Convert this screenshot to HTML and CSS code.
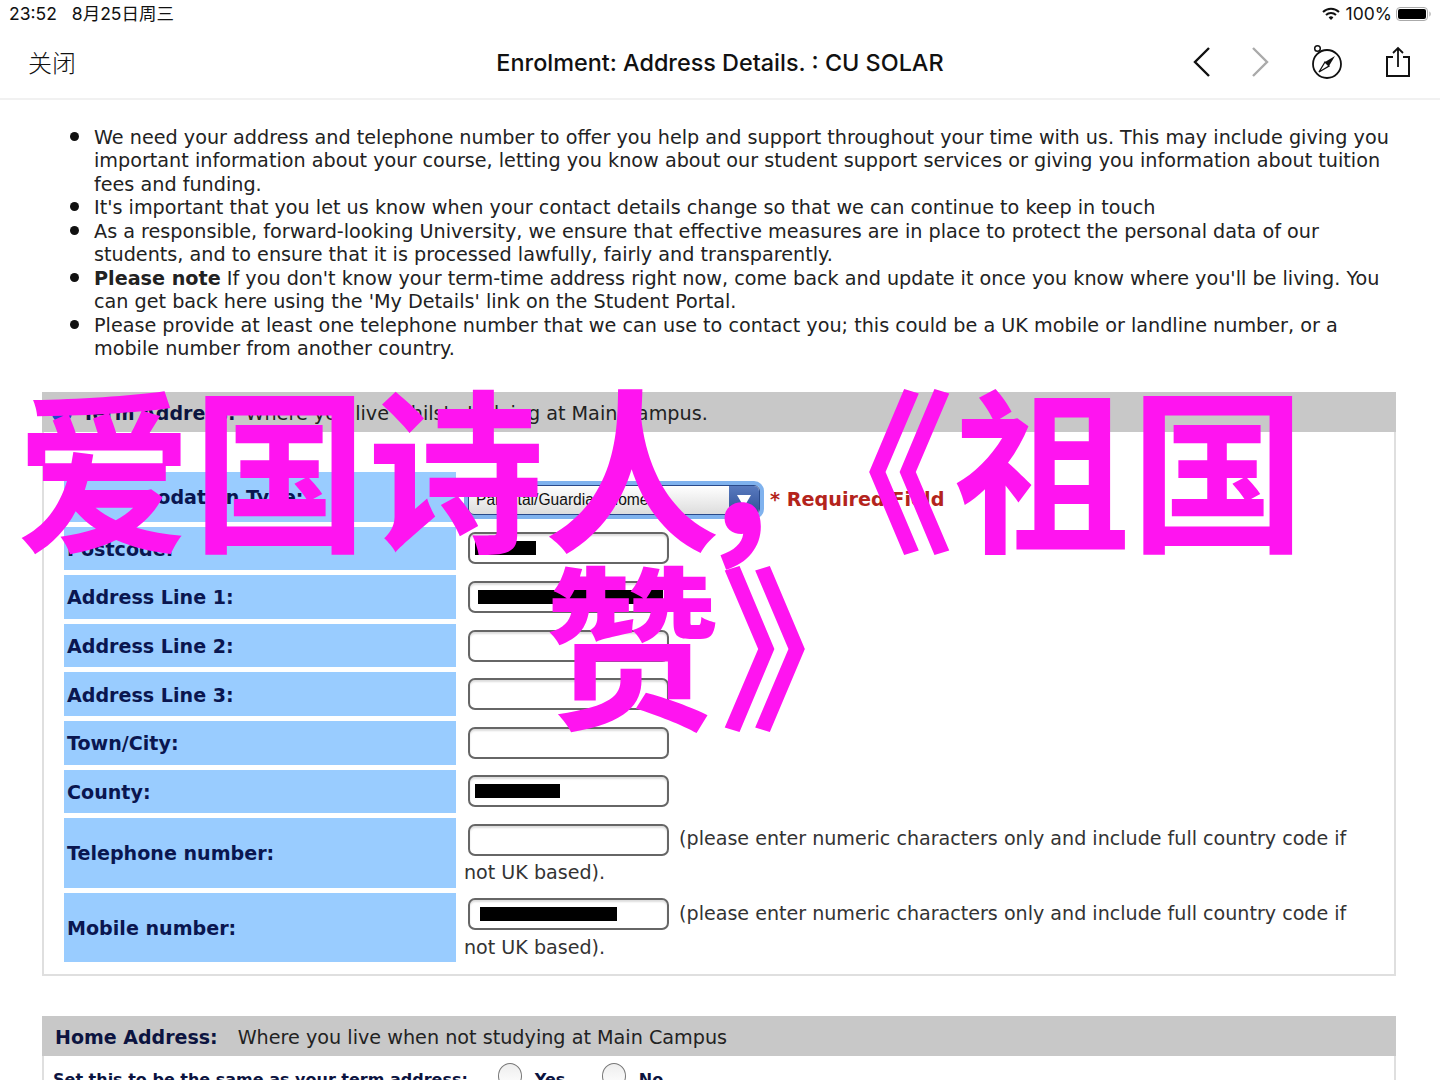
FILE: index.html
```html
<!DOCTYPE html>
<html lang="zh-CN">
<head>
<meta charset="utf-8">
<title>Enrolment: Address Details. : CU SOLAR</title>
<link rel="stylesheet" href="styles.css">
</head>
<body>
<header class="chrome">
  <div class="status">
    <div class="status-left"><span>23:52</span><span>8月25日周三</span></div>
    <div class="status-right">
      <svg class="wifi" viewBox="0 0 18 14" width="18" height="14"><path d="M1 5a11.5 11.5 0 0 1 16 0" fill="none" stroke="#111" stroke-width="2"/><path d="M4 8a7.2 7.2 0 0 1 10 0" fill="none" stroke="#111" stroke-width="2"/><path d="M6.6 10.4a3.4 3.4 0 0 1 4.8 0L9 13z" fill="#111"/></svg>
      <span>100%</span>
      <svg class="battery" viewBox="0 0 36 16" width="36" height="16"><rect x="0.5" y="1.5" width="31" height="13" rx="3.5" fill="none" stroke="#aaa"/><rect x="2" y="3" width="28" height="10" rx="2" fill="#000"/><path d="M33.5 5.5c1.4.4 1.4 4.6 0 5z" fill="#999"/></svg>
    </div>
  </div>
  <div class="toolbar">
    <span class="close">关闭</span>
    <h1 class="title">Enrolment: Address Details. : CU SOLAR</h1>
    <div class="tools">
      <svg class="t-back" viewBox="0 0 18 32" width="18" height="32"><path d="M16 2 2 16l14 14" fill="none" stroke="#111" stroke-width="2.4"/></svg>
      <svg class="t-fwd" viewBox="0 0 18 32" width="18" height="32"><path d="M2 2l14 14L2 30" fill="none" stroke="#aaa" stroke-width="2.4"/></svg>
      <svg class="t-compass" viewBox="0 0 32 36" width="32" height="36"><circle cx="16" cy="20" r="14" fill="none" stroke="#111" stroke-width="1.8"/><circle cx="6.500" cy="4.500" r="2.800" fill="#fff" stroke="#111" stroke-width="1.500"/><path d="M24 12 18 22l-4-4z" fill="#111"/><path d="M8 28l6-10 4 4z" fill="none" stroke="#111" stroke-width="1.300"/></svg>
      <svg class="t-share" viewBox="0 0 26 32" width="26" height="32"><path d="M8 11H2v19h22V11h-6" fill="none" stroke="#111" stroke-width="2"/><path d="M13 21V2M8 7l5-5 5 5" fill="none" stroke="#111" stroke-width="1.800"/></svg>
    </div>
  </div>
</header>

<main class="page">
  <ul class="notes">
    <li>We need your address and telephone number to offer you help and support throughout your time with us. This may include giving you important information about your course, letting you know about our student support services or giving you information about tuition fees and funding.</li>
    <li>It's important that you let us know when your contact details change so that we can continue to keep in touch</li>
    <li>As a responsible, forward-looking University, we ensure that effective measures are in place to protect the personal data of our students, and to ensure that it is processed lawfully, fairly and transparently.</li>
    <li><b>Please note</b> If you don't know your term-time address right now, come back and update it once you know where you'll be living. You can get back here using the 'My Details' link on the Student Portal.</li>
    <li>Please provide at least one telephone number that we can use to contact you; this could be a UK mobile or landline number, or a mobile number from another country.</li>
  </ul>

  <section class="panel">
    <div class="panel-head panel-head-term"><span class="dot"></span><b>Term Address:</b> <span class="head-note">Where you live whilst studying at Main Campus.</span></div>
    <div class="rows">
      <div class="row row-select">
        <div class="label">Accommodation Type:</div>
        <div class="cell cell-select">
          <div class="select"><span class="select-text">Parental/Guardian Home</span><span class="select-arrow"></span></div>
          <span class="required">* Required Field</span>
        </div>
      </div>
      <div class="row"><div class="label">Postcode:</div><div class="cell"><span class="input"><i class="mask mask-post"></i></span></div></div>
      <div class="row"><div class="label">Address Line 1:</div><div class="cell"><span class="input"><i class="mask mask-addr"></i></span></div></div>
      <div class="row"><div class="label">Address Line 2:</div><div class="cell"><span class="input"></span></div></div>
      <div class="row"><div class="label">Address Line 3:</div><div class="cell"><span class="input"></span></div></div>
      <div class="row"><div class="label">Town/City:</div><div class="cell"><span class="input"></span></div></div>
      <div class="row"><div class="label">County:</div><div class="cell"><span class="input"><i class="mask mask-county"></i></span></div></div>
      <div class="row row-tall"><div class="label">Telephone number:</div><div class="cell cell-text"><span class="input"></span> (please enter numeric characters only and include full country code if not UK based).</div></div>
      <div class="row row-tall"><div class="label">Mobile number:</div><div class="cell cell-text"><span class="input"><i class="mask mask-mobile"></i></span> (please enter numeric characters only and include full country code if not UK based).</div></div>
    </div>
  </section>

  <section class="panel panel-home">
    <div class="panel-head panel-head-home"><b>Home Address:</b> <span class="head-note">Where you live when not studying at Main Campus</span></div>
    <div class="same">
      <b class="same-label">Set this to be the same as your term address:</b>
      <span class="radio"></span><b class="opt">Yes</b>
      <span class="radio"></span><b class="opt">No</b>
    </div>
  </section>
</main>

<div class="overlay">
  <div class="ov-line ov-one">爱国诗人<span class="ov-comma">，</span>《祖国</div>
  <div class="ov-line ov-two">赞》</div>
</div>
</body>
</html>
```

FILE: styles.css
```css
* { box-sizing: border-box; }
html, body { margin: 0; padding: 0; }
body {
  width: 1440px;
  height: 1080px;
  overflow: hidden;
  position: relative;
  background: #fff;
  color: #222;
  font-family: "DejaVu Sans", sans-serif;
}
.chrome {
  height: 100px;
  border-bottom: 2px solid #f1f1f1;
  font-family: Inter, "Noto Sans CJK SC", sans-serif;
  color: #111;
}
.status {
  height: 28px;
  padding: 0 8px 0 9px;
  display: flex;
  justify-content: space-between;
  align-items: center;
  font-size: 17.5px;
  line-height: 28px;
}
.status-left { display: flex; gap: 15px; }
.status-right { display: flex; align-items: center; gap: 4px; }
.wifi { margin-right: 2px; }
.toolbar {
  height: 70px;
  display: flex;
  align-items: center;
  position: relative;
  padding: 0 29px 2px 28px;
  justify-content: space-between;
}
.close { font-size: 24px; line-height: 30px; font-family: "Noto Sans CJK SC", sans-serif; font-weight: 300; }
.title {
  position: absolute;
  left: 0;
  right: 0;
  top: 20px;
  margin: 0;
  line-height: 30px;
  text-align: center;
  font-size: 23.4px;
  font-weight: 500;
}
.tools { display: flex; align-items: center; }
.t-back { margin-right: 40px; }
.t-fwd { margin-right: 42px; }
.t-compass { margin-right: 42px; }

.page { padding: 26px 44px 0 42px; }
.notes {
  margin: 0 0 30px;
  padding: 0 0 0 52px;
  font-size: 19.2px;
  line-height: 23.45px;
  height: 236px;
  list-style: none;
}
.notes li { position: relative; }
.notes li::before {
  content: "";
  position: absolute;
  left: -24px;
  top: 6px;
  width: 9px;
  height: 9px;
  border-radius: 50%;
  background: #111;
}
.notes b { font-weight: 700; }

.panel {
  width: 1354px;
  height: 584px;
  border: 2px solid #dfdfdf;
  border-top: 0;
}
.panel-head {
  margin: 0 -2px;
  height: 40px;
  background: #c8c8c8;
  display: flex;
  align-items: center;
  gap: 10px;
  padding: 2px 0 0 10px;
  font-size: 19.2px;
  color: #222;
}
.panel-head b { color: #0c1440; font-size: 19px; }
.dot {
  width: 20px;
  height: 20px;
  border-radius: 50%;
  background: #2244cc;
}
.rows {
  padding: 40px 0 0 20px;
  display: flex;
  flex-direction: column;
  gap: 5px;
}
.row {
  display: flex;
  height: 43.6px;
}
.row-select { height: 49.6px; }
.row-tall { height: 69.5px; }
.label {
  width: 392px;
  flex: none;
  background: #99ccff;
  color: #0a1650;
  font-weight: 700;
  font-size: 19.1px;
  display: flex;
  align-items: center;
  padding: 2px 0 0 3px;
}
.cell {
  flex: 1;
  padding-left: 12px;
  display: flex;
  align-items: center;
}
.cell-text {
  display: block;
  padding: 4px 30px 0 8px;
  font-size: 19.1px;
  line-height: 34px;
  color: #333;
}
.input {
  display: inline-flex;
  align-items: center;
  width: 201px;
  height: 32px;
  border: 2px solid #666;
  border-radius: 7px;
  background: #fff;
  vertical-align: middle;
  margin: 0 4px 0 4px;
  box-shadow: inset 0 2px 2px #ddd;
}
.cell .input { flex: none; }
.row > .cell:not(.cell-text) .input { margin: 0; }
.mask { display: block; height: 14px; background: #000; }
.mask-post { width: 61px; margin-left: 5px; }
.mask-addr { width: 185px; margin-left: 8px; }
.mask-county { width: 85px; margin-left: 5px; }
.mask-mobile { width: 137px; margin-left: 10px; }
.cell-select { gap: 10px; }
.select {
  width: 292px;
  height: 30px;
  margin-top: 6px;
  border: 1px solid #2a4a8a;
  border-radius: 6px;
  background: linear-gradient(#fff, #ddd);
  box-shadow: 0 0 0 4px #7fb2ee;
  display: flex;
  align-items: center;
  justify-content: space-between;
  overflow: hidden;
  font-family: "Liberation Sans", sans-serif;
  font-size: 15.6px;
  color: #111;
  padding-left: 7px;
}
.select-arrow {
  width: 30px;
  height: 30px;
  background: linear-gradient(#5a7cc0, #2e4e96);
  position: relative;
}
.select-arrow::after {
  content: "";
  position: absolute;
  left: 8px;
  top: 10px;
  border-left: 7px solid transparent;
  border-right: 7px solid transparent;
  border-top: 12px solid #fff;
}
.required {
  color: #b4241c;
  font-weight: 700;
  font-size: 19.2px;
  margin-top: 6px;
}

.panel-home { margin-top: 40px; height: auto; border-bottom: 0; }
.panel-head-home { padding-left: 13px; gap: 20px; }
.same {
  display: flex;
  align-items: flex-start;
  height: 40px;
  padding: 7px 0 0 9px;
  color: #0c1440;
  font-size: 16px;
}
.same b { margin-top: 7px; }
.same-label { margin-right: 30px; }
.radio {
  width: 24px;
  height: 26px;
  border-radius: 50%;
  border: 1px solid #777;
  background: linear-gradient(#eee, #fff);
  flex: none;
  margin-right: 13px;
}
.opt { width: 67px; }

.overlay {
  position: absolute;
  left: 0;
  top: 374px;
  width: 1440px;
  color: #ff14f0;
  font-family: "Noto Sans CJK SC", sans-serif;
  font-weight: 700;
  font-size: 176px;
  line-height: 177px;
  text-align: center;
  pointer-events: none;
}
.ov-line { white-space: nowrap; }
.ov-one { padding-right: 118px; }
.ov-comma { margin-left: -30px; position: relative; top: 6px; left: 2px; }
```
